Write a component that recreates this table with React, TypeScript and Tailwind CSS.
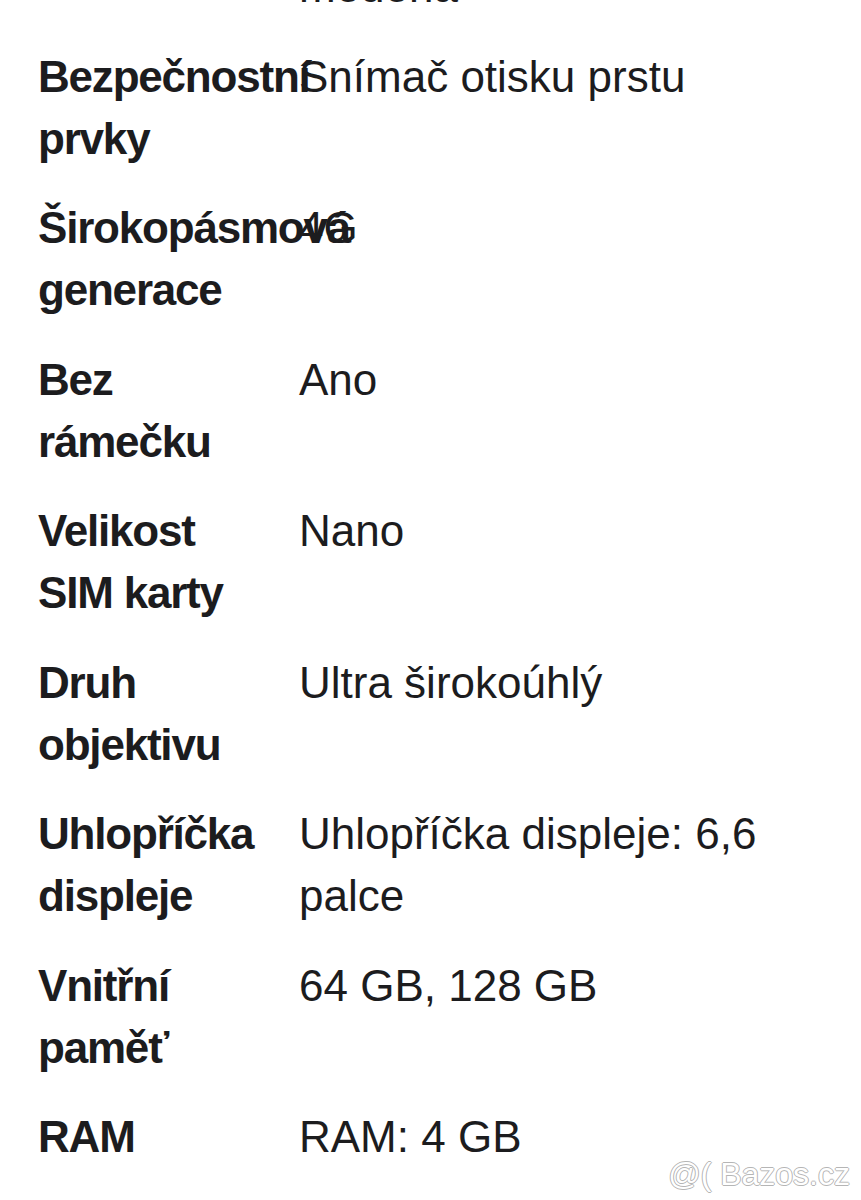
import React from "react";

interface SpecRow {
  label: string;
  value: string;
}

const specs: SpecRow[] = [
  { label: "Barva", value: "Černá, stříbrná, zelená, měděná" },
  { label: "Bezpečnostní prvky", value: "Snímač otisku prstu" },
  { label: "Širokopásmová generace", value: "4G" },
  { label: "Bez rámečku", value: "Ano" },
  { label: "Velikost SIM karty", value: "Nano" },
  { label: "Druh objektivu", value: "Ultra širokoúhlý" },
  { label: "Uhlopříčka displeje", value: "Uhlopříčka displeje: 6,6 palce" },
  { label: "Vnitřní paměť", value: "64 GB, 128 GB" },
  { label: "RAM", value: "RAM: 4 GB" },
];

export default function App() {
  return (
    <div
      className="relative h-[1200px] w-full overflow-hidden bg-white text-[#1c1c1e]"
      style={{ fontFamily: '"Liberation Sans", Arial, sans-serif' }}
    >
      <div className="mt-[-106px] flex flex-col gap-[27.5px] px-[38px]">
        {specs.map((row) => (
          <div key={row.label} className="grid grid-cols-[261px_1fr] text-[44px] leading-[62px]">
            <div className="pr-[30px] font-bold tracking-[-1.2px]">{row.label}</div>
            <div>{row.value}</div>
          </div>
        ))}
      </div>

      <div className="absolute bottom-[10px] right-[11px] text-[32px] leading-none text-white [text-shadow:1px_0_#b5b5b5,-1px_0_#b5b5b5,0_1px_#b5b5b5,0_-1px_#b5b5b5]">
        @( Bazos.cz
      </div>
    </div>
  );
}
